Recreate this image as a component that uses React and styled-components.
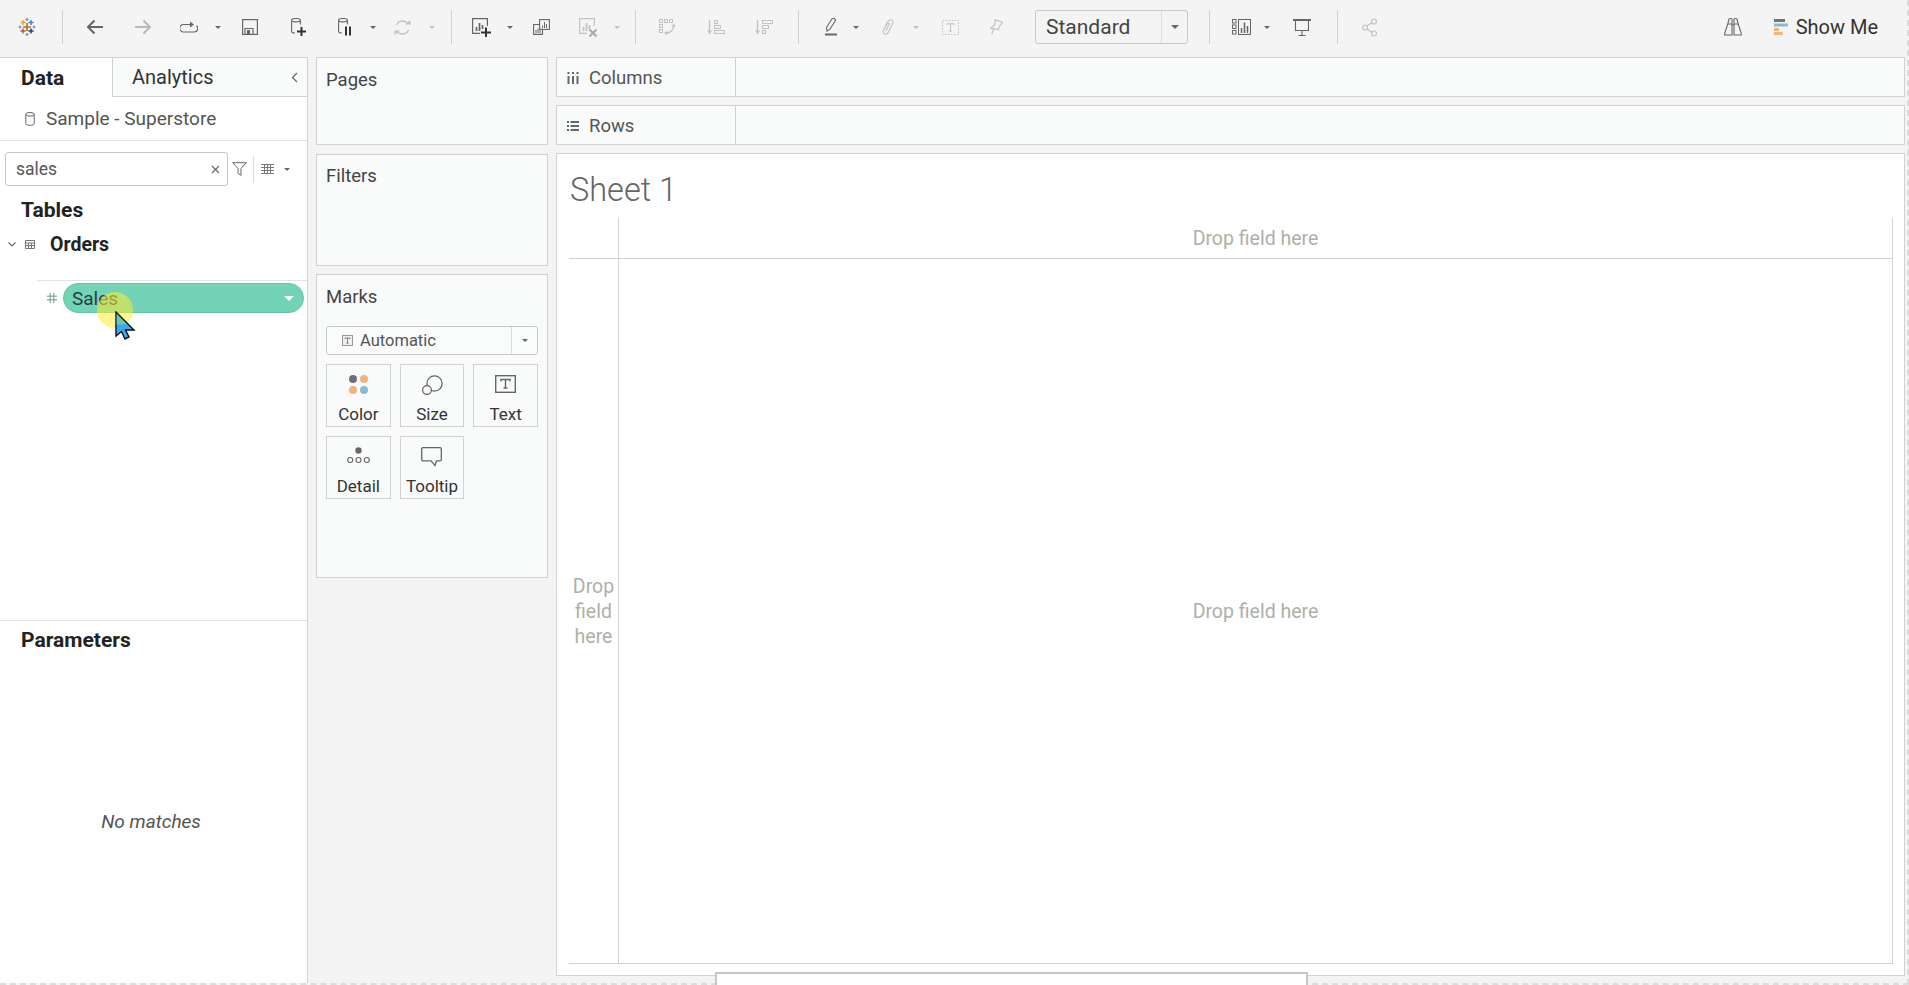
import styled, { createGlobalStyle } from "styled-components";

const GlobalStyle = createGlobalStyle`
  html, body {
    margin: 0;
    padding: 0;
    background: #f4f4f4;
  }
  body {
    font-family: Roboto, "Liberation Sans", sans-serif;
    color: #333;
    overflow: hidden;
  }
  * {
    box-sizing: border-box;
  }
`;

const line = "#d2d2d2";

const Page = styled.div`
  width: 1909px;
  height: 985px;
  display: flex;
  flex-direction: column;
  border-right: 2px dashed #dcdcdc;
  border-bottom: 2px dashed #dcdcdc;
`;

const Toolbar = styled.header`
  height: 57px;
  flex: none;
  display: flex;
  align-items: center;
  padding-right: 29px;
  padding-bottom: 3px;
`;

const Tool = styled.svg`
  flex: none;
  display: block;
  margin-left: ${(props) => props.$ml}px;
  fill: none;
  stroke-linecap: butt;
`;

const Divider = styled.div`
  flex: none;
  width: 1px;
  height: 34px;
  background: #d0d0d0;
  margin-left: ${(props) => props.$ml}px;
`;

const Caret = styled.div`
  flex: none;
  width: 0;
  height: 0;
  margin-left: ${(props) => props.$ml || 0}px;
  border-left: ${(props) => props.$size || 3}px solid transparent;
  border-right: ${(props) => props.$size || 3}px solid transparent;
  border-top: ${(props) => props.$size || 3}px solid ${(props) => props.$color || "#666"};
`;

const ViewSelect = styled.div`
  flex: none;
  width: 153px;
  height: 34px;
  margin-left: ${(props) => props.$ml}px;
  display: flex;
  align-items: center;
  border: 1px solid #c8c8c8;
  border-radius: 3px;
  font-size: 21px;
  color: #444;
`;

const SelectLabel = styled.div`
  flex: 1;
  padding-left: 10px;
  height: 100%;
  display: flex;
  align-items: center;
`;

const SelectArrow = styled.div`
  width: 26px;
  height: 100%;
  border-left: 1px solid #dcdcdc;
  display: flex;
  align-items: center;
  justify-content: center;
`;

const RightTools = styled.div`
  margin-left: auto;
  display: flex;
  align-items: center;
`;

const ShowMe = styled.div`
  margin-left: 32px;
  display: flex;
  align-items: center;
  gap: 8px;
  font-size: 20px;
  color: #333;
`;

const Main = styled.div`
  flex: 1;
  min-height: 0;
  display: flex;
`;

const DataPane = styled.aside`
  width: 308px;
  flex: none;
  background: #fff;
  border-top: 1px solid ${line};
  border-right: 1px solid ${line};
  display: flex;
  flex-direction: column;
`;

const Tabs = styled.div`
  height: 39px;
  flex: none;
  display: flex;
`;

const DataTab = styled.div`
  width: 112px;
  padding-left: 21px;
  display: flex;
  align-items: center;
  font-size: 21px;
  font-weight: 700;
  color: #222;
`;

const AnalyticsTab = styled.div`
  flex: 1;
  padding: 0 9px 0 19px;
  display: flex;
  align-items: center;
  justify-content: space-between;
  background: #f9fafa;
  border-left: 1px solid ${line};
  border-bottom: 1px solid ${line};
  font-size: 20px;
  color: #333;
`;

const SourceRow = styled.div`
  height: 44px;
  flex: none;
  padding-left: 25px;
  display: flex;
  align-items: center;
  gap: 11px;
  border-bottom: 1px solid #e2e2e2;
  font-size: 19px;
  color: #555;
`;

const SearchRow = styled.div`
  height: 34px;
  flex: none;
  margin-top: 11px;
  padding-left: 5px;
  display: flex;
  align-items: center;
`;

const SearchBox = styled.div`
  width: 223px;
  height: 100%;
  padding: 0 7px 0 10px;
  display: flex;
  align-items: center;
  justify-content: space-between;
  border: 1px solid #c8c8c8;
  border-radius: 3px;
  font-size: 17.5px;
  color: #555;
`;

const SearchDivider = styled.div`
  width: 1px;
  height: 27px;
  margin-left: 6px;
  background: #d8d8d8;
`;

const SectionTitle = styled.div`
  padding-left: 21px;
  margin-top: ${(props) => props.$mt}px;
  font-size: 21px;
  line-height: 24px;
  font-weight: 700;
  color: #222;
`;

const TableRow = styled.div`
  height: 24px;
  margin-top: 10px;
  margin-bottom: 1px;
  padding-left: 8px;
  display: flex;
  align-items: center;
  font-size: 19.5px;
  font-weight: 700;
  color: #222;
`;

const FieldList = styled.div`
  margin: 23px 0 0 37px;
  border-top: 1px solid #e2e2e2;
  padding-top: 2px;
`;

const FieldRow = styled.div`
  position: relative;
  height: 30px;
  display: flex;
  align-items: center;
  padding-left: 10px;
`;

const Pill = styled.div`
  width: 241px;
  height: 30px;
  margin-left: 6px;
  padding: 0 9px 0 8px;
  display: flex;
  align-items: center;
  justify-content: space-between;
  background: #72d3b6;
  border: 1px solid #5fc7a8;
  border-radius: 15px;
  font-size: 19px;
  color: #2a3a4a;
`;

const Highlight = styled.div`
  position: absolute;
  left: 60px;
  top: 9px;
  width: 36px;
  height: 36px;
  border-radius: 50%;
  background: rgba(255, 235, 50, 0.55);
`;

const Pointer = styled.svg`
  position: absolute;
  left: 78px;
  top: 28px;
`;

const ParamSection = styled.div`
  margin-top: auto;
  height: 363px;
  flex: none;
  border-top: 1px solid #e2e2e2;
  display: flex;
  flex-direction: column;
`;

const NoMatches = styled.div`
  margin-top: 158px;
  padding-right: 5px;
  text-align: center;
  font-size: 19px;
  font-style: italic;
  color: #555;
`;

const CardColumn = styled.div`
  width: 232px;
  flex: none;
  margin-left: 8px;
  display: flex;
  flex-direction: column;
`;

const Card = styled.section`
  height: ${(props) => props.$h}px;
  flex: none;
  margin-bottom: ${(props) => props.$mb || 0}px;
  padding: ${(props) => props.$pt || 10}px 9px 0;
  background: #f9fafa;
  border: 1px solid ${line};
`;

const CardTitle = styled.div`
  font-size: 18.5px;
  line-height: 24px;
  color: #444;
`;

const MarkSelect = styled.div`
  height: 29px;
  margin-top: 17px;
  display: flex;
  align-items: center;
  background: #fafbfb;
  border: 1px solid #c8c8c8;
  border-radius: 3px;
  font-size: 16.5px;
  color: #555;
`;

const MarkLabel = styled.div`
  flex: 1;
  height: 100%;
  padding-left: 15px;
  display: flex;
  align-items: center;
  gap: 7px;
`;

const MarkArrow = styled.div`
  width: 26px;
  height: 100%;
  border-left: 1px solid #dcdcdc;
  display: flex;
  align-items: center;
  justify-content: center;
`;

const MarkGrid = styled.div`
  display: grid;
  grid-template-columns: repeat(3, 1fr);
  grid-auto-rows: 63px;
  column-gap: 9px;
  row-gap: 9px;
  margin-top: 9px;
`;

const MarkButton = styled.div`
  display: flex;
  flex-direction: column;
  align-items: center;
  border: 1px solid ${line};
  font-size: 17px;
  color: #333;
`;

const MarkIcon = styled.div`
  height: 39px;
  padding-top: 10px;
  flex: none;
`;

const ViewColumn = styled.div`
  flex: 1;
  min-width: 0;
  margin-left: 8px;
  padding-right: 2px;
  display: flex;
  flex-direction: column;
`;

const Shelf = styled.div`
  height: 40px;
  flex: none;
  margin-bottom: 8px;
  display: flex;
  background: #f9fafa;
  border: 1px solid ${line};
`;

const ShelfLabel = styled.div`
  width: 179px;
  padding: 1px 0 0 10px;
  display: flex;
  align-items: center;
  border-right: 1px solid ${line};
  font-size: 18.5px;
  color: #555;
`;

const ShelfIcon = styled.svg`
  width: 12px;
  height: 12px;
  margin-right: 10px;
  flex: none;
`;

const Sheet = styled.section`
  position: relative;
  height: 823px;
  flex: none;
  background: #fff;
  border: 1px solid ${line};
  padding: 0 11px 0 12px;
`;

const SheetTitle = styled.h1`
  margin: 0;
  height: 64px;
  padding: 18px 0 0 1px;
  font-size: 32.5px;
  line-height: 36px;
  font-weight: 300;
  color: #666;
`;

const Chart = styled.div`
  height: 746px;
  display: grid;
  grid-template-columns: 50px 1fr;
  grid-template-rows: 41px 1fr;
  color: #aeb0a8;
  font-size: 19.5px;
`;

const ChartCell = styled.div`
  display: flex;
  align-items: center;
  justify-content: center;
  text-align: center;
  line-height: 25px;
  border-right: 1px solid ${line};
  border-bottom: 1px solid ${line};
`;

const BottomTab = styled.div`
  position: absolute;
  left: 158px;
  top: 818px;
  width: 593px;
  height: 14px;
  background: #fff;
  border: 2px solid #c6c6c6;
  border-bottom: none;
`;

const grey = "#666";
const pale = "#c2c2c2";

function Plus({ x, y, r, color, width = 1.5 }) {
  return <path d={`M${x - r} ${y}H${x + r}M${x} ${y - r}V${y + r}`} stroke={color} strokeWidth={width} />;
}

function TableauLogo({ ml }) {
  return (
    <Tool $ml={ml} width="20" height="20" viewBox="0 0 20 20">
      <Plus x={10} y={10} r={4} color="#bc6c25" width={1.7} />
      <Plus x={6} y={5.5} r={2.6} color="#e8a15b" />
      <Plus x={14} y={5.5} r={2.6} color="#4a86b8" />
      <Plus x={6} y={14} r={2.6} color="#a9642c" />
      <Plus x={14} y={14} r={2.6} color="#22427c" />
      <Plus x={10} y={2.5} r={1.5} color="#888" width={1.2} />
      <Plus x={10} y={17.5} r={1.5} color="#888" width={1.2} />
      <Plus x={3} y={10} r={1.5} color="#888" width={1.2} />
      <Plus x={17} y={10} r={1.5} color="#888" width={1.2} />
    </Tool>
  );
}

function Arrow({ ml, color, flip }) {
  const d = flip ? "M0 8H15M8.5 1.5L15 8L8.5 14.5" : "M16 8H1M7.5 1.5L1 8L7.5 14.5";
  return (
    <Tool $ml={ml} width="16" height="16" viewBox="0 0 16 16">
      <path d={d} stroke={color} strokeWidth="2" />
    </Tool>
  );
}

function LoopIcon({ ml }) {
  return (
    <Tool $ml={ml} width="18" height="12" viewBox="0 0 18 12">
      <path d="M10 3.5H3.5a3.5 3.5 0 0 0 0 7.5H14a3.5 3.5 0 0 0 2.5-6.2" stroke={grey} strokeWidth="1.2" />
      <path d="M10 0.5L14 3.5L10 6.5Z" fill={grey} />
    </Tool>
  );
}

function SaveIcon({ ml }) {
  return (
    <Tool $ml={ml} width="16" height="16" viewBox="0 0 16 16">
      <rect x="0.6" y="0.6" width="14.8" height="14.8" stroke={grey} strokeWidth="1.2" />
      <path d="M3 15V9.5H11V15" stroke={grey} strokeWidth="1.2" />
      <rect x="5" y="11" width="3" height="4" fill={grey} />
    </Tool>
  );
}

function DbBadge({ ml, pause }) {
  return (
    <Tool $ml={ml} width="15" height="18" viewBox="0 0 15 18">
      <ellipse cx="5" cy="2.2" rx="4.4" ry="1.7" stroke={grey} strokeWidth="1.1" />
      <path d="M0.6 2.2V13.2C0.6 14.4 2 15 4 15M9.4 2.2V6.5" stroke={grey} strokeWidth="1.1" />
      {pause ? (
        <path d="M8 8.5V17.5M12 8.5V17.5" stroke="#333" strokeWidth="2" />
      ) : (
        <path d="M6 13.5H15M10.5 9V18" stroke="#333" strokeWidth="2" />
      )}
    </Tool>
  );
}

function RefreshIcon({ ml }) {
  return (
    <Tool $ml={ml} width="17" height="17" viewBox="0 0 17 17">
      <path d="M2.5 6A6.5 6.5 0 0 1 14 5M14.5 11A6.5 6.5 0 0 1 3 12" stroke={pale} strokeWidth="1.4" />
      <path d="M11 5.5H16.5V1ZM6 11.5H0.5V16Z" fill={pale} />
    </Tool>
  );
}

function NewSheetIcon({ ml, clear }) {
  const color = clear ? pale : grey;
  return (
    <Tool $ml={ml} width="19" height="19" viewBox="0 0 19 19">
      <path d="M8 15.4H0.6V0.6H15.4V8" stroke={color} strokeWidth="1.2" />
      <path d="M4.5 13V9M7.5 13V5M10.5 11V7" stroke={color} strokeWidth="1.7" />
      {clear ? (
        <path d="M10.5 11.5L17.5 18.5M17.5 11.5L10.5 18.5" stroke="#a8a8a8" strokeWidth="2" />
      ) : (
        <path d="M9 14.5H19M14 9.5V19" stroke="#333" strokeWidth="2" />
      )}
    </Tool>
  );
}

function DuplicateIcon({ ml }) {
  return (
    <Tool $ml={ml} width="17" height="16" viewBox="0 0 17 16">
      <path d="M6.5 5.5H0.6V15.4H9.5V10.5" stroke={grey} strokeWidth="1.1" />
      <path d="M3 14V11M5 14V9.5M7 14V11" stroke={grey} strokeWidth="1" />
      <rect x="6.6" y="0.6" width="9.8" height="9.8" stroke={grey} strokeWidth="1.1" />
      <path d="M9.5 9V6.5M11.5 9V3M13.5 9V5" stroke={grey} strokeWidth="1" />
    </Tool>
  );
}

function SwapIcon({ ml }) {
  return (
    <Tool $ml={ml} width="17" height="17" viewBox="0 0 17 17" stroke={pale} strokeWidth="1">
      <rect x="0.5" y="0.5" width="3" height="3" />
      <rect x="5.5" y="0.5" width="3" height="3" />
      <rect x="10.5" y="0.5" width="3" height="3" />
      <rect x="0.5" y="5.5" width="3" height="3" />
      <rect x="0.5" y="10.5" width="3" height="3" />
      <path d="M14.5 7C14.5 11 11.5 14 7.5 14" strokeWidth="1.3" />
      <path d="M12.5 7.5L14.7 4.8L16.8 7.5ZM8 11.8L5 14L8 16.4Z" fill={pale} stroke="none" />
    </Tool>
  );
}

function SortIcon({ ml, desc }) {
  const bars = desc
    ? [[7, 1, 11], [7, 6, 7], [7, 11, 4]]
    : [[7, 1, 4], [7, 6, 7], [7, 11, 11]];
  return (
    <Tool $ml={ml} width="18" height="15" viewBox="0 0 18 15">
      <path d="M2.5 0V12" stroke={pale} strokeWidth="1.3" />
      <path d="M0 10.5H5L2.5 14.5Z" fill={pale} />
      {bars.map(([x, y, w]) => (
        <rect key={y} x={x + 0.5} y={y - 0.5} width={w - 1} height="3" stroke={pale} />
      ))}
    </Tool>
  );
}

function PenIcon({ ml }) {
  return (
    <Tool $ml={ml} width="12" height="18" viewBox="0 0 12 18">
      <path d="M2 13L1.5 9.5L6.8 1C7.5 0 8.8 0.2 9.6 0.8C10.4 1.4 10.6 2.4 10 3.3L4.8 11.4Z" stroke={grey} strokeWidth="1.1" />
      <path d="M0 16.5H12" stroke={grey} strokeWidth="2" />
    </Tool>
  );
}

function ClipIcon({ ml }) {
  return (
    <Tool $ml={ml} width="12" height="16" viewBox="0 0 12 16">
      <path d="M3.3 8.5L6.2 2.3C6.8 1 8.2.5 9.5 1C10.8 1.6 11.3 3 10.7 4.3L6.2 13.6C5.5 15 4 15.5 2.6 14.9C1.2 14.2.8 12.7 1.5 11.3L5.2 3.8L7.4 4.8L4 12" stroke={pale} strokeWidth="1.1" />
    </Tool>
  );
}

function TextBoxIcon({ ml }) {
  return (
    <Tool $ml={ml} width="17" height="15" viewBox="0 0 17 15">
      <rect x="0.5" y="0.5" width="16" height="14" stroke={pale} strokeDasharray="1.6 1.4" />
      <path d="M5 5V3.8H12V5M8.5 3.8V11.2M7 11.2H10" stroke={pale} strokeWidth="1" />
    </Tool>
  );
}

function PinIcon({ ml }) {
  return (
    <Tool $ml={ml} width="13" height="16" viewBox="0 0 13 16">
      <path d="M5.2 0.6L12.5 3.4L9.4 7.2L8.4 10.6L0.8 9.2L5 5.4ZM4 9.6L1.6 15.2" stroke={pale} strokeWidth="1.2" />
    </Tool>
  );
}

function FitIcon({ ml }) {
  return (
    <Tool $ml={ml} width="19" height="16" viewBox="0 0 19 16" stroke={grey} strokeWidth="1">
      <rect x="0.5" y="0.5" width="3.5" height="3.5" />
      <rect x="0.5" y="6" width="3.5" height="3.5" />
      <rect x="0.5" y="11.5" width="3.5" height="3.5" />
      <rect x="6.5" y="0.5" width="12" height="15" />
      <path d="M9.5 14V9M12.5 14V3.5M15.5 14V7" strokeWidth="1.5" />
    </Tool>
  );
}

function PresentIcon({ ml }) {
  return (
    <Tool $ml={ml} width="18" height="17" viewBox="0 0 18 17">
      <path d="M0 1H18" stroke={grey} strokeWidth="2" />
      <path d="M2.5 1.5V11.5H15.5V1.5M9 11.5V16.5M5.5 16.5H12.5" stroke={grey} strokeWidth="1.1" />
    </Tool>
  );
}

function ShareIcon({ ml }) {
  return (
    <Tool $ml={ml} width="15" height="19" viewBox="0 0 15 19" stroke={pale} strokeWidth="1.2">
      <circle cx="3" cy="9.5" r="2.5" />
      <circle cx="12" cy="3.5" r="2.5" />
      <circle cx="12" cy="15.5" r="2.5" />
      <path d="M5 8L9.8 4.8M5 11L9.8 14.2" />
    </Tool>
  );
}

function BinocularsIcon() {
  return (
    <Tool $ml={0} width="18" height="18" viewBox="0 0 18 18" stroke={grey} strokeWidth="1.1">
      <path d="M3.8 6L5 1C5.4 .4 7.6 .4 8 1V17H.7L.8 15Z" />
      <path d="M14.2 6L13 1C12.6 .4 10.4 .4 10 1V17H17.3L17.2 15Z" />
      <path d="M8 7H10M3.8 6H8M10 6H14.2" />
    </Tool>
  );
}

function ShowMeBars() {
  return (
    <Tool $ml={0} width="14" height="16" viewBox="0 0 14 16">
      <rect width="11" height="3" y="0" fill="#76717f" />
      <rect width="14" height="3" y="4.5" fill="#86bccb" />
      <rect width="5" height="3" y="9" fill="#f3b27a" />
      <rect width="8.5" height="3" y="13" fill="#f3b27a" />
    </Tool>
  );
}

function SourceIcon() {
  return (
    <svg width="10" height="14" viewBox="0 0 10 14" fill="none" stroke="#666" strokeWidth="1">
      <ellipse cx="5" cy="2.3" rx="4.2" ry="1.8" />
      <path d="M0.8 2.3V11.5C0.8 12.6 2.6 13.3 5 13.3C7.4 13.3 9.2 12.6 9.2 11.5V2.3" />
    </svg>
  );
}

function TypeIcon({ size = 11 }) {
  return (
    <svg width={size} height={size} viewBox="0 0 11 11" fill="none" style={{ flex: "none" }}>
      <rect x="0.5" y="0.5" width="10" height="10" fill="#efefef" stroke="#999" />
      <path d="M3 4V3H8V4M5.5 3V8.2M4.4 8.2H6.6" stroke="#777" strokeWidth="0.9" />
    </svg>
  );
}

const marks = [
  {
    name: "Color",
    icon: (
      <svg width="19" height="19" viewBox="0 0 19 19">
        <circle cx="4" cy="4" r="4" fill="#716d78" />
        <circle cx="15" cy="4" r="4" fill="#f2b27c" />
        <circle cx="4" cy="15" r="4" fill="#f2b27c" />
        <circle cx="15" cy="15" r="4" fill="#86bccb" />
      </svg>
    ),
  },
  {
    name: "Size",
    icon: (
      <svg width="22" height="20" viewBox="0 0 22 20" fill="none" stroke="#666" strokeWidth="1.3">
        <circle cx="13.5" cy="8.5" r="7.6" />
        <circle cx="6" cy="15" r="4.4" fill="#f9fafa" />
      </svg>
    ),
  },
  {
    name: "Text",
    icon: (
      <svg width="21" height="18" viewBox="0 0 21 18" fill="none">
        <rect x="0.7" y="0.7" width="19.6" height="16.6" stroke="#666" strokeWidth="1.4" />
        <path d="M6 6.5V4.5H15V6.5M10.5 4.5V13M8.5 13H12.5" stroke="#666" strokeWidth="1.4" />
      </svg>
    ),
  },
  {
    name: "Detail",
    icon: (
      <svg width="23" height="17" viewBox="0 0 23 17" fill="none" stroke="#666" strokeWidth="1.1">
        <circle cx="11.5" cy="3.5" r="3.2" fill="#666" stroke="none" />
        <circle cx="3.2" cy="13" r="2.5" />
        <circle cx="11.5" cy="13" r="2.5" />
        <circle cx="19.8" cy="13" r="2.5" />
      </svg>
    ),
  },
  {
    name: "Tooltip",
    icon: (
      <svg width="21" height="20" viewBox="0 0 21 20" fill="none" stroke="#666" strokeWidth="1.3">
        <path d="M2 .7H19C19.8 .7 20.3 1.2 20.3 2V12.5C20.3 13.3 19.8 13.8 19 13.8H15.5L14 18.5L10 13.8H2C1.2 13.8 .7 13.3 .7 12.5V2C.7 1.2 1.2 .7 2 .7Z" />
      </svg>
    ),
  },
];

export default function App() {
  return (
    <Page>
      <GlobalStyle />
      <Toolbar>
        <TableauLogo ml={17} />
        <Divider $ml={25} />
        <Arrow ml={24} color={grey} />
        <Arrow ml={32} color="#b9b9b9" flip />
        <LoopIcon ml={29} />
        <Caret $ml={17} />
        <SaveIcon ml={21} />
        <DbBadge ml={33} />
        <DbBadge ml={32} pause />
        <Caret $ml={17} />
        <RefreshIcon ml={18} />
        <Caret $ml={18} $color={pale} />
        <Divider $ml={16} />
        <NewSheetIcon ml={20} />
        <Caret $ml={16} />
        <DuplicateIcon ml={20} />
        <NewSheetIcon ml={29} clear />
        <Caret $ml={16} $color={pale} />
        <Divider $ml={15} />
        <SwapIcon ml={23} />
        <SortIcon ml={31} />
        <SortIcon ml={30} desc />
        <Divider $ml={25} />
        <PenIcon ml={26} />
        <Caret $ml={16} />
        <ClipIcon ml={23} />
        <Caret $ml={19} $color={pale} />
        <TextBoxIcon ml={23} />
        <PinIcon ml={31} />
        <ViewSelect $ml={32}>
          <SelectLabel>Standard</SelectLabel>
          <SelectArrow>
            <Caret $size={4} />
          </SelectArrow>
        </ViewSelect>
        <Divider $ml={21} />
        <FitIcon ml={22} />
        <Caret $ml={13} />
        <PresentIcon ml={23} />
        <Divider $ml={26} />
        <ShareIcon ml={24} />
        <RightTools>
          <BinocularsIcon />
          <ShowMe>
            <ShowMeBars />
            Show Me
          </ShowMe>
        </RightTools>
      </Toolbar>

      <Main>
        <DataPane>
          <Tabs>
            <DataTab>Data</DataTab>
            <AnalyticsTab>
              Analytics
              <svg width="7" height="11" viewBox="0 0 7 11" fill="none" stroke="#666" strokeWidth="1.2">
                <path d="M6 1L1.5 5.5L6 10" />
              </svg>
            </AnalyticsTab>
          </Tabs>
          <SourceRow>
            <SourceIcon />
            Sample - Superstore
          </SourceRow>
          <SearchRow>
            <SearchBox>
              sales
              <svg width="9" height="9" viewBox="0 0 9 9" stroke="#666" strokeWidth="1.1">
                <path d="M1 1L8 8M8 1L1 8" />
              </svg>
            </SearchBox>
            <svg width="15" height="14" viewBox="0 0 15 14" fill="none" stroke="#666" strokeWidth="1" style={{ marginLeft: 4 }}>
              <path d="M.7 .7H14.3L9 6.5V13.3L6 11.5V6.5Z" />
            </svg>
            <SearchDivider />
            <svg width="13" height="10" viewBox="0 0 13 10" stroke="#777" strokeWidth="1" style={{ marginLeft: 7 }}>
              <path d="M0 .5H13M0 3.5H13M0 6.5H13M0 9.5H13M3.5 0V10M6.5 0V10M9.5 0V10" />
            </svg>
            <Caret $ml={10} $size={3.5} />
          </SearchRow>
          <SectionTitle $mt={12}>Tables</SectionTitle>
          <TableRow>
            <svg width="8" height="5" viewBox="0 0 8 5" fill="none" stroke="#666" strokeWidth="1.1">
              <path d="M.5 .5L4 4L7.5 .5" />
            </svg>
            <svg width="10" height="9" viewBox="0 0 10 9" fill="none" stroke="#777" strokeWidth="1" style={{ margin: "0 15px 0 9px" }}>
              <path d="M.5 .5H9.5V8.5H.5ZM.5 3H9.5M.5 5.5H9.5M3.5 3V8.5M6.5 3V8.5" />
            </svg>
            Orders
          </TableRow>
          <FieldList>
            <FieldRow>
              <svg width="10" height="10" viewBox="0 0 10 10" stroke="#6f9c80" strokeWidth="1">
                <path d="M3.2 0V10M6.8 0V10M0 3.2H10M0 6.8H10" />
              </svg>
              <Pill>
                Sales
                <Caret $size={5} $color="#fff" />
              </Pill>
              <Highlight />
              <Pointer width="21" height="30" viewBox="0 0 21 30">
                <path d="M1 1V25L6.5 20.5L10 28L14 26L10.5 19H19Z" fill="#3aa8ee" stroke="#111" strokeWidth="1.4" />
                <path d="M1.7 3V13.5H12Z" fill="#6cc7a2" />
              </Pointer>
            </FieldRow>
          </FieldList>
          <ParamSection>
            <SectionTitle $mt={7}>Parameters</SectionTitle>
            <NoMatches>No matches</NoMatches>
          </ParamSection>
        </DataPane>

        <CardColumn>
          <Card $h={88} $mb={9}>
            <CardTitle>Pages</CardTitle>
          </Card>
          <Card $h={112} $mb={8} $pt={9}>
            <CardTitle>Filters</CardTitle>
          </Card>
          <Card $h={304}>
            <CardTitle>Marks</CardTitle>
            <MarkSelect>
              <MarkLabel>
                <TypeIcon />
                Automatic
              </MarkLabel>
              <MarkArrow>
                <Caret $size={3.5} />
              </MarkArrow>
            </MarkSelect>
            <MarkGrid>
              {marks.map((mark) => (
                <MarkButton key={mark.name}>
                  <MarkIcon>{mark.icon}</MarkIcon>
                  {mark.name}
                </MarkButton>
              ))}
            </MarkGrid>
          </Card>
        </CardColumn>

        <ViewColumn>
          <Shelf>
            <ShelfLabel>
              <ShelfIcon viewBox="0 0 12 12" stroke="#666" strokeWidth="2">
                <path d="M1.5 4V12M6 4V12M10.5 4V12M1.5 0V2M6 0V2M10.5 0V2" />
              </ShelfIcon>
              Columns
            </ShelfLabel>
          </Shelf>
          <Shelf>
            <ShelfLabel>
              <ShelfIcon viewBox="0 0 12 12" stroke="#666" strokeWidth="2">
                <path d="M0 2H2M3.5 2H12M0 6H2M3.5 6H12M0 10H2M3.5 10H12" />
              </ShelfIcon>
              Rows
            </ShelfLabel>
          </Shelf>
          <Sheet>
            <SheetTitle>Sheet 1</SheetTitle>
            <Chart>
              <ChartCell />
              <ChartCell>Drop field here</ChartCell>
              <ChartCell>
                Drop
                <br />
                field
                <br />
                here
              </ChartCell>
              <ChartCell>Drop field here</ChartCell>
            </Chart>
            <BottomTab />
          </Sheet>
        </ViewColumn>
      </Main>
    </Page>
  );
}
